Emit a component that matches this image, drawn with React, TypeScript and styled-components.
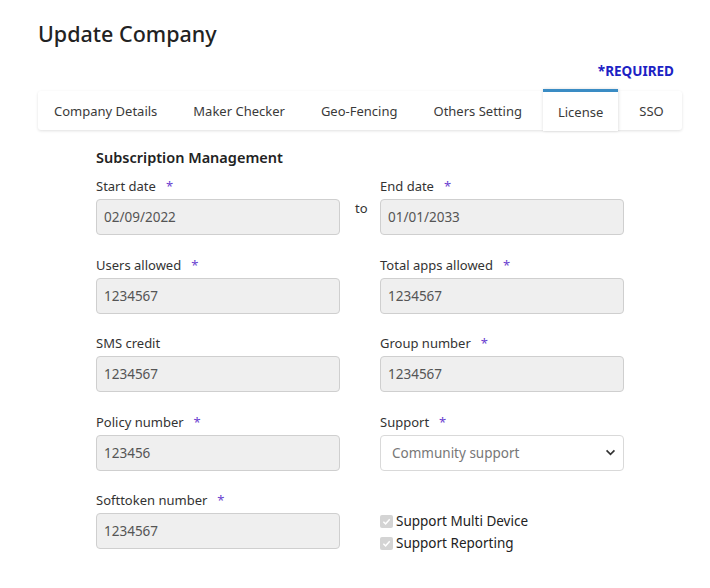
import React from 'react';
import styled, { createGlobalStyle } from 'styled-components';

const GlobalStyle = createGlobalStyle`
  body {
    margin: 0;
    background: #fff;
    font-family: "Noto Sans", "Open Sans", sans-serif;
    color: #222;
  }
`;

const Page = styled.div`
  width: 710px;
  height: 588px;
  padding: 18px 28px 0 38px;
  box-sizing: border-box;
  overflow: hidden;
`;

const Title = styled.h1`
  margin: 0;
  font-size: 21.5px;
  font-weight: 500;
  color: #222;
  line-height: 32px;
`;

const Required = styled.div`
  text-align: right;
  padding-right: 8px;
  margin-top: 11px;
  font-size: 13.5px;
  font-weight: 700;
  color: #1c22c4;
  line-height: 20px;
`;

const Tabs = styled.div`
  display: flex;
  margin-top: 10px;
  width: 644px;
  height: 39px;
  background: #fff;
  box-shadow: 0 1px 3px rgba(0, 0, 0, 0.12);
  border-radius: 3px;
`;

const Tab = styled.div<{ $active?: boolean }>`
  display: flex;
  align-items: center;
  justify-content: center;
  padding: ${p => (p.$active ? '1px 15px 0' : '1px 18px 0')};
  font-size: 13px;
  color: #3a3a3a;
  white-space: nowrap;
  position: relative;
  &:first-child {
    padding-left: 16px;
  }
  ${p =>
    p.$active &&
    `
    margin: -2px 3px 0;
    height: 42px;
    border-top: 3px solid #3a8cc4;
    box-sizing: border-box;
    box-shadow: 1px 0 3px rgba(0,0,0,0.1), -1px 0 3px rgba(0,0,0,0.06);
    background: #fff;
    z-index: 1;
  `}
`;

const Form = styled.div`
  padding: 17px 0 0 58px;
`;

const Section = styled.h2`
  margin: 0 0 10px;
  font-size: 14.5px;
  font-weight: 600;
  color: #222;
  line-height: 20px;
`;

const Grid = styled.div`
  display: grid;
  grid-template-columns: 244px 40px 244px;
  row-gap: 20.5px;
`;

const Field = styled.div`
  display: flex;
  flex-direction: column;
`;

const Label = styled.label`
  font-size: 13px;
  color: #333;
  line-height: 18px;
  margin-bottom: 4px;
`;

const Star = styled.span`
  color: #6a3fd0;
  margin-left: 10px;
`;

const Input = styled.div`
  height: 36px;
  box-sizing: border-box;
  border: 1px solid #cfcfcf;
  border-radius: 4px;
  background: #efefef;
  padding: 0 7px;
  display: flex;
  align-items: center;
  font-size: 13.5px;
  color: #555;
`;

const Select = styled(Input)`
  background: #fff;
  border-color: #d9d9d9;
  justify-content: space-between;
  color: #777;
  padding: 0 7px 0 11px;
`;

const To = styled.div`
  font-size: 13px;
  color: #333;
  padding: 22px 0 0 15px;
`;

const Checks = styled.div`
  display: flex;
  flex-direction: column;
  gap: 4px;
  padding-top: 21px;
`;

const Check = styled.label`
  display: flex;
  align-items: center;
  gap: 3px;
  font-size: 13.5px;
  color: #222;
  line-height: 18px;
`;

const Box = styled.span`
  width: 13px;
  height: 13px;
  border-radius: 2px;
  background: #d4d4d4;
  display: flex;
  align-items: center;
  justify-content: center;
`;

const Spacer = styled.div``;

const F = ({ label, value, req }: { label: string; value: string; req?: boolean }) => (
  <Field>
    <Label>
      {label}
      {req && <Star>*</Star>}
    </Label>
    <Input>{value}</Input>
  </Field>
);

const Tick = () => (
  <Box>
    <svg width="9" height="9" viewBox="0 0 10 10">
      <path d="M1.5 5.2 L4 7.6 L8.6 2.4" fill="none" stroke="#fff" strokeWidth="1.6" />
    </svg>
  </Box>
);

export default function App() {
  const tabs = ['Company Details', 'Maker Checker', 'Geo-Fencing', 'Others Setting', 'License', 'SSO'];
  return (
    <Page>
      <GlobalStyle />
      <Title>Update Company</Title>
      <Required>*REQUIRED</Required>
      <Tabs>
        {tabs.map(t => (
          <Tab key={t} $active={t === 'License'}>
            {t}
          </Tab>
        ))}
      </Tabs>
      <Form>
        <Section>Subscription Management</Section>
        <Grid>
          <F label="Start date" value="02/09/2022" req />
          <To>to</To>
          <F label="End date" value="01/01/2033" req />

          <F label="Users allowed" value="1234567" req />
          <Spacer />
          <F label="Total apps allowed" value="1234567" req />

          <F label="SMS credit" value="1234567" />
          <Spacer />
          <F label="Group number" value="1234567" req />

          <F label="Policy number" value="123456" req />
          <Spacer />
          <Field>
            <Label>
              Support<Star>*</Star>
            </Label>
            <Select>
              Community support
              <svg width="11" height="7" viewBox="0 0 12 8">
                <path d="M1.5 1.5 L6 6 L10.5 1.5" fill="none" stroke="#333" strokeWidth="1.9" />
              </svg>
            </Select>
          </Field>

          <F label="Softtoken number" value="1234567" req />
          <Spacer />
          <Checks>
            <Check>
              <Tick />
              Support Multi Device
            </Check>
            <Check>
              <Tick />
              Support Reporting
            </Check>
          </Checks>
        </Grid>
      </Form>
    </Page>
  );
}
